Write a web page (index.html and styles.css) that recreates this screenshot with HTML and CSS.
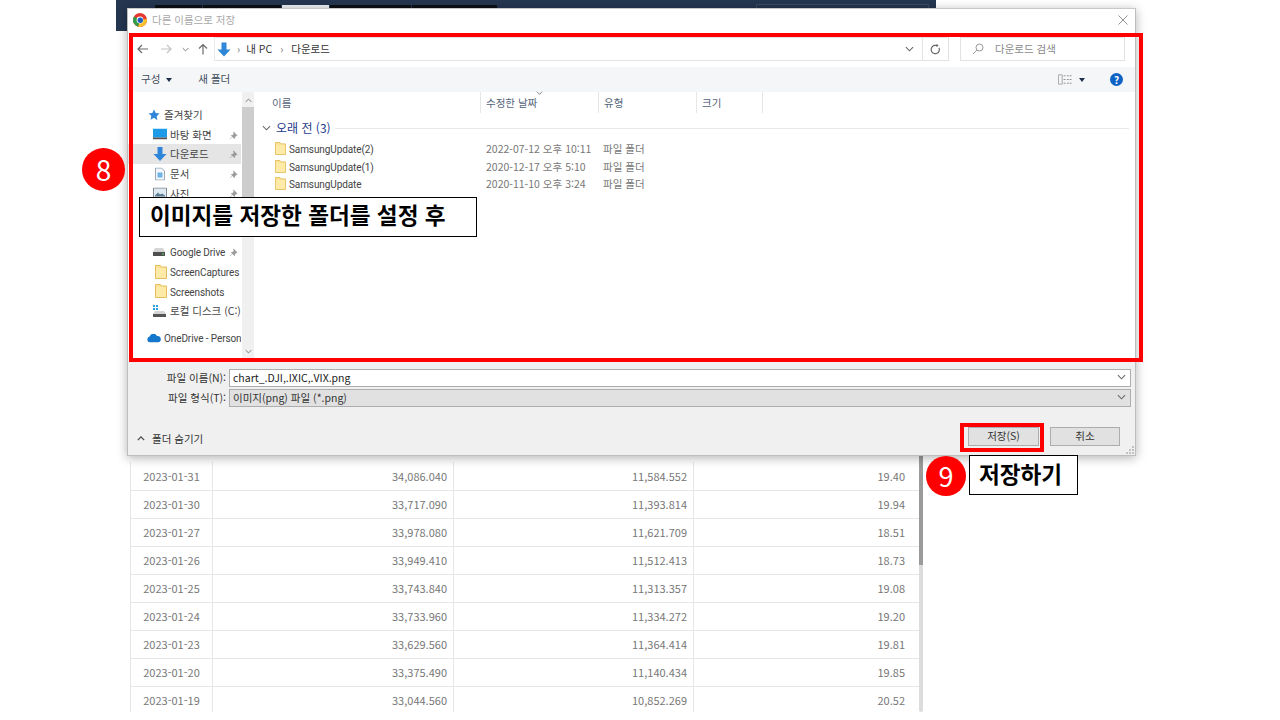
FILE: index.html
```html
<!DOCTYPE html>
<html lang="ko">
<head>
    <meta charset="UTF-8">
    <title>다른 이름으로 저장</title>
    <link rel="stylesheet" href="styles.css">
</head>
<body>

<svg class="defs" width="0" height="0">
    <symbol id="folder" viewBox="0 0 12 14">
        <path d="M0.500 0.500h5l1 1.500h5v11.500h-11z" fill="#ffe396" stroke="#e3bd5c"/>
        <path d="M1 3h10v10h-10z" fill="#ffeaa8"/>
    </symbol>
    <symbol id="pin" viewBox="0 0 10 10">
        <path d="M5 1l4 4-1.200 0.400-1.500 1.500-0.300 1.600-3.500-3.500 1.600-0.300 1.500-1.500z M3 7l-2 2" fill="#9a9a9a" stroke="#8c8c8c" stroke-width="0.600"/>
    </symbol>
    <symbol id="arrow-down" viewBox="0 0 14 15">
        <path d="M4.500 0.500h5v7h4l-6.500 7-6.500-7h4z" fill="#2f86d8"/>
    </symbol>
    <symbol id="chev" viewBox="0 0 10 6">
        <path d="M1 1l4 4 4-4" fill="none" stroke="#666" stroke-width="1.200"/>
    </symbol>
</svg>

<!-- 뒤쪽 페이지 -->
<div class="topbar">
    <span class="tab tab-a"></span>
    <span class="tab tab-b"></span>
    <span class="tab tab-on"></span>
    <span class="tab tab-c"></span>
    <span class="tab tab-d"></span>
    <span class="top-search"></span>
</div>

<div class="sheet">
    <table class="prices">
        <tbody>
            <tr><td class="date">2023-01-31</td><td>34,086.040</td><td>11,584.552</td><td>19.40</td></tr>
            <tr><td class="date">2023-01-30</td><td>33,717.090</td><td>11,393.814</td><td>19.94</td></tr>
            <tr><td class="date">2023-01-27</td><td>33,978.080</td><td>11,621.709</td><td>18.51</td></tr>
            <tr><td class="date">2023-01-26</td><td>33,949.410</td><td>11,512.413</td><td>18.73</td></tr>
            <tr><td class="date">2023-01-25</td><td>33,743.840</td><td>11,313.357</td><td>19.08</td></tr>
            <tr><td class="date">2023-01-24</td><td>33,733.960</td><td>11,334.272</td><td>19.20</td></tr>
            <tr><td class="date">2023-01-23</td><td>33,629.560</td><td>11,364.414</td><td>19.81</td></tr>
            <tr><td class="date">2023-01-20</td><td>33,375.490</td><td>11,140.434</td><td>19.85</td></tr>
            <tr><td class="date">2023-01-19</td><td>33,044.560</td><td>10,852.269</td><td>20.52</td></tr>
        </tbody>
    </table>
    <div class="sheet-scroll"><div class="sheet-thumb"></div></div>
</div>

<!-- 저장 대화상자 -->
<div class="dialog">
    <div class="titlebar">
        <svg class="chrome" width="14" height="14" viewBox="0 0 14 14">
            <circle cx="7" cy="7" r="7" fill="#e5392f"/>
            <path d="M7 7L13.900 6A7 7 0 0 1 5 13.700z" fill="#fbc02d"/>
            <path d="M7 7L5 13.700A7 7 0 0 1 1 3.500z" fill="#2f9e48"/>
            <circle cx="7" cy="7" r="3.400" fill="#fff"/>
            <circle cx="7.300" cy="7.300" r="2.700" fill="#1f5fbf"/>
        </svg>
        <span class="title-text">다른 이름으로 저장</span>
        <svg class="close" width="10" height="10" viewBox="0 0 10 10"><path d="M0.500 0.500l9 9M9.500 0.500l-9 9" stroke="#8f8f8f" fill="none"/></svg>
    </div>

    <div class="navrow">
        <svg class="nav-btn back" width="12" height="10" viewBox="0 0 12 10"><path d="M11 5H1.500M5 1L1 5l4 4" fill="none" stroke="#6a6a6a" stroke-width="1.200"/></svg>
        <svg class="nav-btn fwd" width="12" height="10" viewBox="0 0 12 10"><path d="M1 5h9.500M7 1l4 4-4 4" fill="none" stroke="#c4c4c4" stroke-width="1.200"/></svg>
        <svg class="nav-btn recent" width="7" height="5"><use href="#chev"/></svg>
        <svg class="nav-btn up" width="10" height="12" viewBox="0 0 10 12"><path d="M5 11.500V1.500M1 5.500l4-4 4 4" fill="none" stroke="#6a6a6a" stroke-width="1.200"/></svg>
        <div class="address">
            <svg class="addr-icon" width="14" height="15"><use href="#arrow-down"/></svg>
            <span class="crumb-sep">›</span>
            <span class="crumb">내 PC</span>
            <span class="crumb-sep">›</span>
            <span class="crumb">다운로드</span>
            <svg class="addr-chev" width="9" height="6"><use href="#chev"/></svg>
            <span class="addr-refresh">
                <svg width="11" height="11" viewBox="0 0 12 12"><path d="M9.800 4A4.500 4.500 0 1 1 6 1.500H8" fill="none" stroke="#666" stroke-width="1.300"/><path d="M7 0l2.500 1.500L7 3.500z" fill="#666"/></svg>
            </span>
        </div>
        <div class="search">
            <svg width="12" height="12" viewBox="0 0 12 12"><circle cx="7.500" cy="4.500" r="3.500" fill="none" stroke="#999"/><path d="M5 7l-4 4" stroke="#999" fill="none"/></svg>
            <span class="search-text">다운로드 검색</span>
        </div>
    </div>

    <div class="toolbar">
        <span class="tool">구성</span>
        <span class="caret"></span>
        <span class="tool tool-new">새 폴더</span>
        <svg class="view-icon" width="14" height="11" viewBox="0 0 15 11"><path d="M0.500 0.500h4v10h-4z" fill="#f6f6f6" stroke="#a5a5a5"/><path d="M6 1.500h2M9.500 1.500h2M12.500 1.500h2M6 5.500h2M9.500 5.500h2M12.500 5.500h2M6 9.500h2M9.500 9.500h2M12.500 9.500h2" stroke="#8a8a8a" fill="none"/></svg>
        <span class="caret"></span>
        <span class="help">?</span>
    </div>

    <div class="browser">
        <div class="tree">
            <div class="tree-list">
                <div class="tree-row top">
                    <svg class="tree-icon" width="12" height="12" viewBox="0 0 12 12"><path d="M6 0.500l1.700 3.600 3.800 0.500-2.800 2.700 0.700 3.900L6 8.800l-3.400 1.900 0.700-3.900L0.500 4.600l3.800-0.500z" fill="#2f86d8"/></svg>
                    <span>즐겨찾기</span>
                </div>
                <div class="tree-row">
                    <svg class="tree-icon" width="14" height="11" viewBox="0 0 14 11"><path d="M0 0h14v9H0z" fill="#1e9be8"/><path d="M0 9h14v2H0z" fill="#555"/></svg>
                    <span>바탕 화면</span>
                    <svg class="pin" width="9" height="9"><use href="#pin"/></svg>
                </div>
                <div class="tree-row active">
                    <svg class="tree-icon" width="14" height="15"><use href="#arrow-down"/></svg>
                    <span>다운로드</span>
                    <svg class="pin" width="9" height="9"><use href="#pin"/></svg>
                </div>
                <div class="tree-row">
                    <svg class="tree-icon narrow" width="10" height="13" viewBox="0 0 10 13"><path d="M0.500 0.500h6l3 3v9h-9z" fill="#f4f8fc" stroke="#9aa7b5"/><path d="M2.500 5h5v5h-5z" fill="#6fb2e6"/></svg>
                    <span>문서</span>
                    <svg class="pin" width="9" height="9"><use href="#pin"/></svg>
                </div>
                <div class="tree-row">
                    <svg class="tree-icon" width="14" height="11" viewBox="0 0 14 11"><path d="M0.500 0.500h13v10h-13z" fill="#dfe9f2" stroke="#7f8a96"/><path d="M2 8l3-3 2 2 2-1 3 2v1H2z" fill="#5a7d92"/></svg>
                    <span>사진</span>
                    <svg class="pin" width="9" height="9"><use href="#pin"/></svg>
                </div>
                <div class="tree-row"></div>
                <div class="tree-row">
                    <svg class="tree-icon" width="12" height="12" viewBox="0 0 12 12"><path d="M5 0h2v8h3v2H2V8h3z" fill="#3fa64a"/></svg>
                </div>
                <div class="tree-row">
                    <svg class="tree-icon" width="12" height="8" viewBox="0 0 12 8"><path d="M2 0h8l2 4v4H0V4z" fill="#d5d5d5"/><path d="M0 4h12v4H0z" fill="#4f4f4f"/><path d="M9 5.500h2v1H9z" fill="#5fd35f"/></svg>
                    <span class="latin">Google Drive</span>
                    <svg class="pin" width="9" height="9"><use href="#pin"/></svg>
                </div>
                <div class="tree-row">
                    <svg class="tree-icon narrow" width="12" height="14"><use href="#folder"/></svg>
                    <span class="latin">ScreenCaptures</span>
                </div>
                <div class="tree-row">
                    <svg class="tree-icon narrow" width="12" height="14"><use href="#folder"/></svg>
                    <span class="latin">Screenshots</span>
                </div>
                <div class="tree-row">
                    <svg class="tree-icon" width="13" height="12" viewBox="0 0 13 12"><path d="M0 0h2v2H0zM3 0h2v2H3zM0 3h2v2H0zM3 3h2v2H3z" fill="#29a3e0"/><path d="M2 6h9l2 3v3H0V9z" fill="#d5d5d5"/><path d="M0 9h13v3H0z" fill="#555"/></svg>
                    <span>로컬 디스크 (C:)</span>
                </div>
                <div class="tree-row cloud">
                    <svg class="tree-icon" width="14" height="9" viewBox="0 0 14 9"><path d="M3 9A3 3 0 0 1 2.600 3.100 4 4 0 0 1 10 2.500 3.200 3.200 0 0 1 11 9z" fill="#1577cc"/></svg>
                    <span class="latin">OneDrive - Personal</span>
                </div>
            </div>
            <div class="tree-scroll">
                <svg class="scroll-up" width="7" height="5"><use href="#chev"/></svg>
                <div class="tree-thumb"></div>
                <svg class="scroll-down" width="7" height="5"><use href="#chev"/></svg>
            </div>
        </div>

        <div class="files">
            <div class="file-head">
                <span class="col col-name">이름</span>
                <span class="col col-date">수정한 날짜<svg class="sort" width="7" height="4"><use href="#chev"/></svg></span>
                <span class="col col-type">유형</span>
                <span class="col col-size">크기</span>
            </div>
            <div class="group">
                <svg width="9" height="6"><use href="#chev"/></svg>
                <span class="group-name">오래 전 (3)</span>
                <span class="group-line"></span>
            </div>
            <div class="file-row">
                <svg class="file-icon" width="11" height="13"><use href="#folder"/></svg>
                <span class="file-name latin">SamsungUpdate(2)</span>
                <span class="file-date">2022-07-12 오후 10:11</span>
                <span class="file-type">파일 폴더</span>
            </div>
            <div class="file-row">
                <svg class="file-icon" width="11" height="13"><use href="#folder"/></svg>
                <span class="file-name latin">SamsungUpdate(1)</span>
                <span class="file-date">2020-12-17 오후 5:10</span>
                <span class="file-type">파일 폴더</span>
            </div>
            <div class="file-row">
                <svg class="file-icon" width="11" height="13"><use href="#folder"/></svg>
                <span class="file-name latin">SamsungUpdate</span>
                <span class="file-date">2020-11-10 오후 3:24</span>
                <span class="file-type">파일 폴더</span>
            </div>
        </div>
    </div>

    <div class="fields">
        <div class="field">
            <label class="field-label">파일 이름(N):</label>
            <div class="field-box">chart_.DJI,.IXIC,.VIX.png<svg width="9" height="6"><use href="#chev"/></svg></div>
        </div>
        <div class="field">
            <label class="field-label">파일 형식(T):</label>
            <div class="field-box select">이미지(png) 파일 (*.png)<svg width="9" height="6"><use href="#chev"/></svg></div>
        </div>
    </div>

    <div class="footer">
        <div class="toggle">
            <svg width="8" height="5" viewBox="0 0 10 6"><path d="M1 5l4-4 4 4" fill="none" stroke="#444" stroke-width="1.500"/></svg>
            <span>폴더 숨기기</span>
        </div>
        <button class="btn save">저장(S)</button>
        <button class="btn">취소</button>
    </div>
    <svg class="grip" width="8" height="8" viewBox="0 0 8 8"><path d="M6 0h2v2H6zM3 3h2v2H3zM6 3h2v2H6zM0 6h2v2H0zM3 6h2v2H3zM6 6h2v2H6z" fill="#c2c2c2"/></svg>
</div>

<!-- 설명 표시 -->
<div class="mark mark-list"></div>
<div class="mark mark-save"></div>
<div class="badge badge-8">8</div>
<div class="badge badge-9">9</div>
<div class="note note-8">이미지를 저장한 폴더를 설정 후</div>
<div class="note note-9">저장하기</div>

</body>
</html>
```

FILE: styles.css
```css
html, body {
    margin: 0;
    height: 720px;
    overflow: hidden;
    background: #fff;
    font-family: "Noto Sans CJK KR", "Noto Sans", sans-serif;
}
.defs {
    position: absolute;
}

/* page behind the dialog */
.topbar {
    position: relative;
    margin-left: 116px;
    width: 820px;
    height: 31px;
    background: #253650;
}
.tab {
    position: absolute;
    top: 5px;
    height: 4px;
    background: #0c0f14;
}
.tab-a { left: 39px; width: 47px; }
.tab-b { left: 87px; width: 78px; }
.tab-on { left: 166px; width: 47px; background: #eceff2; }
.tab-c { left: 214px; width: 81px; }
.tab-d { left: 296px; width: 85px; }
.top-search {
    position: absolute;
    left: 640px;
    top: 4px;
    width: 171px;
    height: 8px;
    border: 1px solid #3b4a60;
}
.sheet {
    display: flex;
    margin-left: 130px;
    width: 793px;
    height: 681px;
    align-items: flex-start;
    overflow: hidden;
}
.prices {
    margin-top: 431px;
    width: 789px;
    table-layout: fixed;
    border-collapse: collapse;
    font-size: 11px;
    color: #777;
}
.prices td {
    height: 28px;
    padding: 0 6px 0 0;
    box-sizing: border-box;
    text-align: right;
    border-bottom: 1px solid #e6e6e6;
    border-left: 1px solid #e6e6e6;
}
.prices td:nth-child(1) { width: 82px; }
.prices td:nth-child(2) { width: 241px; }
.prices td:nth-child(3) { width: 240px; }
.prices td:nth-child(4) { padding-right: 14px; }
.prices td.date {
    text-align: center;
    padding: 0;
}
.sheet-scroll {
    width: 4px;
    height: 681px;
    background: #dcdcdc;
    border-radius: 0 0 2px 2px;
}
.sheet-thumb {
    height: 534px;
    background: #9b9b9b;
}

/* save dialog */
.dialog {
    position: absolute;
    left: 127px;
    top: 8px;
    width: 1009px;
    height: 448px;
    box-sizing: border-box;
    display: flex;
    flex-direction: column;
    background: #f0f0f0;
    border: 1px solid #bdbdbd;
    border-top-color: #c9c9c9;
    box-shadow: 0 2px 10px rgba(0, 0, 0, 0.3);
    font-size: 10.5px;
    color: #4a4a4a;
}
.latin {
    padding-top: 2px;
    font-family: Roboto, "Noto Sans", sans-serif;
    font-size: 10px;
    letter-spacing: -0.1px;
}
.titlebar {
    display: flex;
    align-items: center;
    height: 21px;
    padding: 0 7px 0 5px;
    background: #fff;
}
.chrome {
    margin-right: 5px;
}
.title-text {
    color: #a8a8a8;
}
.close {
    margin-left: auto;
}
.navrow {
    display: flex;
    align-items: center;
    height: 37px;
    box-sizing: border-box;
    padding: 7px 10px 6px 0;
    background: #fff;
}
.nav-btn {
    flex: none;
}
.back { margin-left: 9px; }
.fwd { margin-left: 11px; }
.recent { margin-left: 10px; }
.up { margin-left: 9px; }
.address {
    display: flex;
    align-items: center;
    width: 735px;
    height: 24px;
    margin-left: 6px;
    box-sizing: border-box;
    border: 1px solid #e3e3e3;
    border-left-color: #e9e9e9;
    padding-left: 2px;
    color: #333;
}
.crumb {
    padding-bottom: 2px;
}
.crumb-sep {
    margin: 0 6px;
    padding-bottom: 2px;
    color: #777;
}
.crumb + .crumb-sep {
    margin: 0 8px;
}
.addr-chev {
    margin-left: auto;
    margin-right: 8px;
}
.addr-refresh {
    display: flex;
    align-items: center;
    justify-content: center;
    width: 25px;
    height: 22px;
    border-left: 1px solid #e3e3e3;
}
.search {
    display: flex;
    align-items: center;
    gap: 11px;
    width: 165px;
    height: 24px;
    margin-left: 11px;
    padding-left: 11px;
    box-sizing: border-box;
    border: 1px solid #e3e3e3;
    color: #8a8a8a;
}
.search-text {
    padding-bottom: 2px;
}
.toolbar {
    display: flex;
    align-items: center;
    height: 25px;
    padding: 0 12px 0 13px;
    background: #f5f6f7;
    color: #3f4a5a;
}
.tool {
    padding-bottom: 2px;
}
.caret {
    width: 0;
    height: 0;
    margin-left: 6px;
    border: 3px solid transparent;
    border-top: 4px solid #1e2f4d;
    border-bottom: 0;
}
.tool-new {
    margin-left: 26px;
}
.view-icon {
    margin-left: auto;
}
.toolbar .caret:nth-of-type(4) {
    margin-left: 7px;
}
.help {
    width: 13px;
    height: 13px;
    margin-left: 25px;
    border-radius: 50%;
    background: #0c63c4;
    color: #fff;
    font-size: 10px;
    font-weight: 700;
    line-height: 13px;
    text-align: center;
}
.browser {
    display: flex;
    height: 270px;
    background: #fff;
}
.tree {
    display: flex;
    width: 126px;
    flex: none;
}
.tree-list {
    width: 113px;
    padding-top: 13px;
    overflow: hidden;
    white-space: nowrap;
}
.tree-row {
    display: flex;
    align-items: center;
    position: relative;
    height: 19.6px;
    padding-left: 42px;
    color: #444;
}
.tree-row.active {
    background: #e5e5e5;
}
.tree-row.top {
    padding-left: 36px;
}
.tree-row.cloud {
    margin-top: 7.5px;
    padding-left: 36px;
}
.tree-icon {
    position: absolute;
    left: 25px;
    top: 50%;
    transform: translateY(-50%);
}
.tree-icon.narrow { left: 27px; }
.top .tree-icon { left: 20px; }
.cloud .tree-icon { left: 19px; }
.pin {
    position: absolute;
    left: 101px;
    top: 6px;
}
.tree-scroll {
    position: relative;
    width: 12px;
    margin-left: 1px;
    background: #f0f0f0;
}
.tree-thumb {
    position: absolute;
    top: 15px;
    left: 0;
    width: 12px;
    height: 122px;
    background: #cdcdcd;
}
.scroll-up {
    position: absolute;
    top: 6px;
    left: 3px;
    transform: rotate(180deg);
}
.scroll-down {
    position: absolute;
    top: 257px;
    left: 3px;
}
.files {
    flex: 1;
    padding-left: 1px;
}
.file-head {
    display: flex;
    height: 21px;
    color: #55657a;
}
.col {
    position: relative;
    box-sizing: border-box;
    border-right: 1px solid #e6e6e6;
    padding-left: 5px;
    line-height: 21px;
}
.col-name { width: 226px; padding-left: 17px; }
.col-date { width: 118px; }
.col-type { width: 98px; }
.col-size { width: 66px; }
.sort {
    position: absolute;
    left: 55px;
    top: -1px;
}
.group {
    display: flex;
    align-items: center;
    height: 27px;
    padding: 2px 6px 0 7px;
    box-sizing: border-box;
}
.group-name {
    margin-left: 5px;
    font-size: 12px;
    color: #1e3a8a;
}
.group-line {
    flex: 1;
    height: 1px;
    margin: 2px 0 0 4px;
    background: #e8e8e8;
}
.file-row {
    display: flex;
    align-items: center;
    height: 17.5px;
    color: #444;
}
.file-icon {
    margin-left: 20px;
    flex: none;
}
.file-name {
    width: 197px;
    margin-left: 3px;
}
.file-date {
    width: 117px;
    color: #777;
}
.file-type {
    color: #777;
}
.fields {
    padding: 7px 4px 0 0;
}
.field {
    display: flex;
    align-items: center;
    height: 18px;
    margin-bottom: 2px;
}
.field-label {
    width: 98px;
    margin-right: 3px;
    padding-bottom: 2px;
    text-align: right;
    color: #333;
}
.field-box {
    flex: 1;
    display: flex;
    align-items: center;
    justify-content: space-between;
    height: 18px;
    padding: 0 4px 2px 3px;
    box-sizing: border-box;
    background: #fff;
    border: 1px solid #adadad;
    color: #222;
}
.field-box.select {
    background: #e1e1e1;
    color: #333;
}
.footer {
    display: flex;
    align-items: center;
    height: 19px;
    margin-top: 18px;
    padding: 0 15px 0 9px;
}
.toggle {
    display: flex;
    align-items: center;
    gap: 7px;
    margin-right: auto;
    margin-top: 3px;
    color: #333;
}
.btn {
    width: 70px;
    height: 19px;
    margin-left: 11px;
    padding: 0 0 2px;
    box-sizing: border-box;
    background: #e1e1e1;
    border: 1px solid #adadad;
    font: inherit;
    color: #333;
}
.btn.save {
    width: 71px;
}
.grip {
    position: absolute;
    right: 1px;
    bottom: 1px;
}

/* annotations */
.mark {
    position: absolute;
    box-sizing: border-box;
    border: 4px solid #f00;
}
.mark-list {
    left: 129px;
    top: 33px;
    width: 1014px;
    height: 329px;
}
.mark-save {
    left: 960px;
    top: 423px;
    width: 84px;
    height: 29px;
}
.badge {
    position: absolute;
    border-radius: 50%;
    background: #f00;
    color: #fff;
    text-align: center;
}
.badge-8 {
    left: 82px;
    top: 148px;
    width: 43px;
    height: 43px;
    font-size: 28px;
    line-height: 43px;
}
.badge-9 {
    left: 926px;
    top: 456px;
    width: 40px;
    height: 40px;
    font-size: 27px;
    line-height: 40px;
}
.note {
    position: absolute;
    box-sizing: border-box;
    display: flex;
    align-items: center;
    background: #fff;
    border: 1px solid #000;
    color: #000;
    font-size: 22.6px;
    font-weight: 700;
    white-space: nowrap;
}
.note-8 {
    left: 139px;
    top: 197px;
    width: 338px;
    height: 40px;
    padding: 0 0 5px 10px;
}
.note-9 {
    left: 969px;
    top: 455px;
    width: 109px;
    height: 40px;
    padding: 0 0 4px 9px;
}
```
